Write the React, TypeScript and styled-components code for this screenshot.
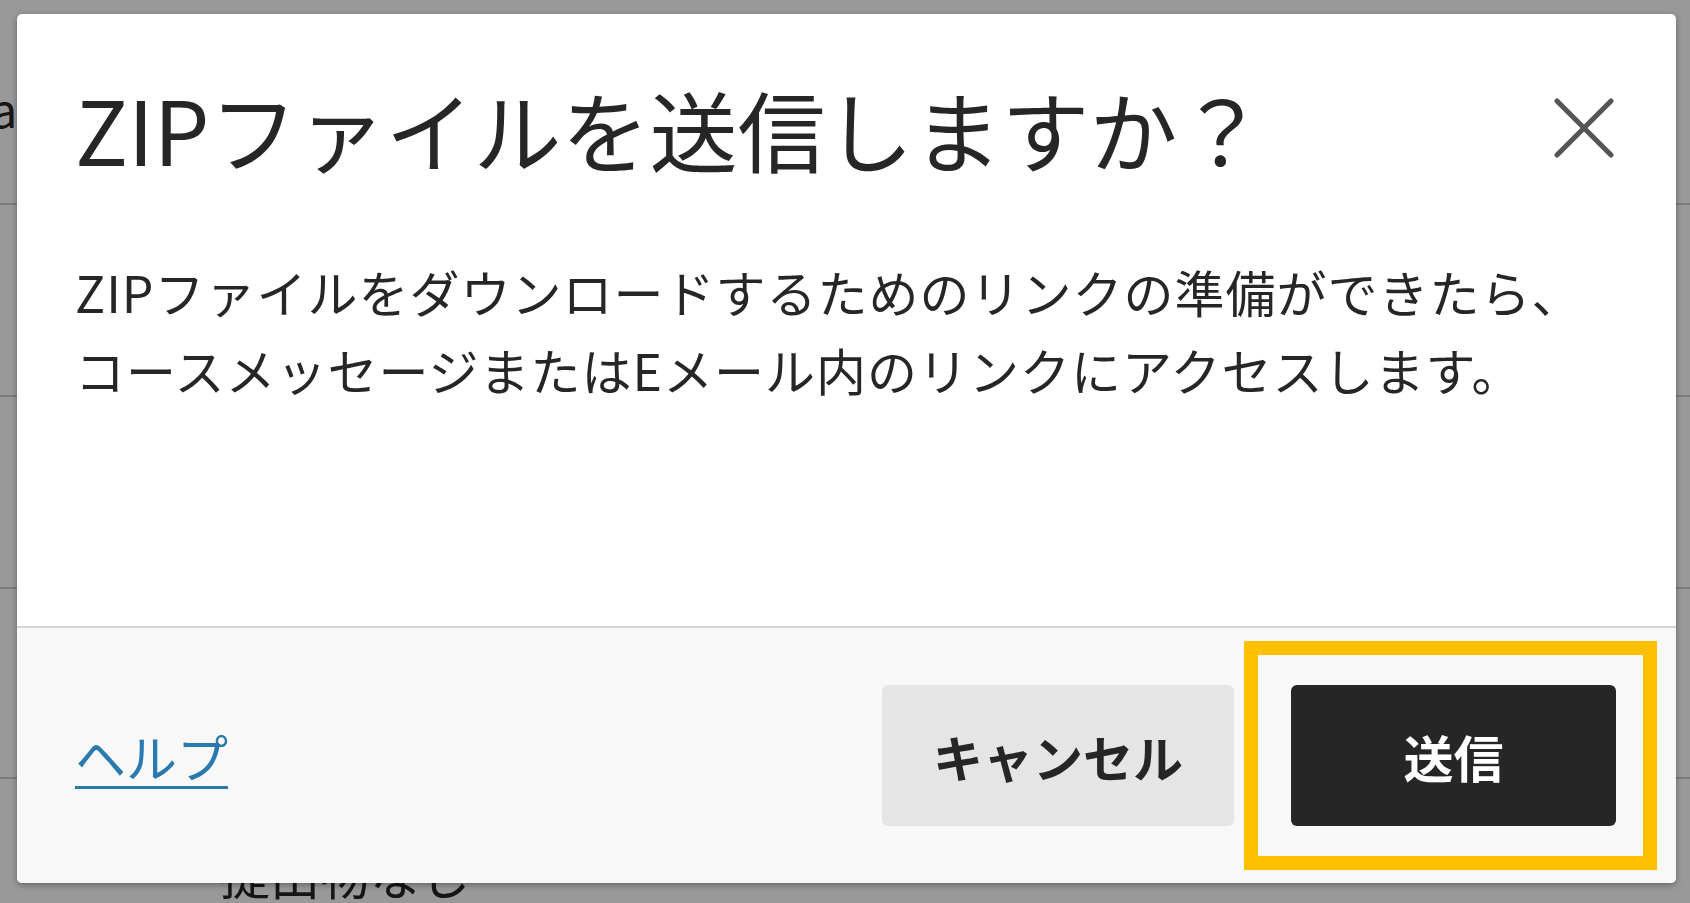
import React from "react";
import styled, { createGlobalStyle } from "styled-components";

const GlobalStyle = createGlobalStyle`
  body {
    margin: 0;
    font-family: "Noto Sans CJK JP", "Noto Sans", sans-serif;
    color: #262626;
  }
`;

const Page = styled.div`
  position: relative;
  width: 100%;
  height: 903px;
  overflow: hidden;
  background: #ffffff;
`;

const List = styled.div`
  display: flex;
  flex-direction: column;
  padding-top: 13px;
`;

const Row = styled.div<{ $h: number; $top?: number }>`
  display: flex;
  align-items: ${(p) => (p.$top ? "flex-start" : "center")};
  height: ${(p) => p.$h}px;
  box-sizing: border-box;
  padding-top: ${(p) => p.$top ?? 0}px;
  border-bottom: 2px solid #cfcfcf;
  padding-left: 220px;
  font-size: 50px;
  line-height: 72px;
  color: #262626;
`;

const EdgeLabel = styled.span`
  margin-left: -262px;
  font-size: 46px;
`;

const Overlay = styled.div`
  position: absolute;
  inset: 0;
  background: rgba(0, 0, 0, 0.4);
  display: flex;
  align-items: flex-start;
  padding: 14px 14px 20px 17px;
`;

const Dialog = styled.div`
  width: 1659px;
  height: 869px;
  background: #ffffff;
  border-radius: 5px;
  box-shadow: 0 2px 6px rgba(0, 0, 0, 0.35);
  display: flex;
  flex-direction: column;
  overflow: hidden;
`;

const Content = styled.div`
  flex: 1;
  padding: 61px 62px 0 58px;
`;

const Header = styled.div`
  display: flex;
  align-items: center;
  justify-content: space-between;
`;

const Title = styled.h1`
  margin: 0;
  font-size: 88px;
  font-weight: 400;
  line-height: 1.2;
`;

const CloseButton = styled.button`
  display: flex;
  padding: 0;
  border: none;
  background: none;
  cursor: pointer;
`;

const Message = styled.p`
  margin: 71px 0 0;
  font-size: 50px;
  line-height: 78px;
  letter-spacing: 1px;
`;

const Footer = styled.div`
  height: 255px;
  border-top: 2px solid #d4d4d4;
  background: #f8f8f8;
  display: flex;
  align-items: center;
  justify-content: space-between;
  padding: 0 19px 0 58px;
`;

const HelpLink = styled.a`
  font-size: 51px;
  color: #2a7ab0;
  text-decoration: underline;
  text-decoration-thickness: 3px;
  text-underline-offset: 8px;
  cursor: pointer;
`;

const Actions = styled.div`
  display: flex;
  align-items: center;
  gap: 10px;
`;

const Button = styled.button<{ $primary?: boolean }>`
  height: 141px;
  width: ${(p) => (p.$primary ? 325 : 352)}px;
  border: none;
  border-radius: 6px;
  background: ${(p) => (p.$primary ? "#262626" : "#e5e5e5")};
  color: ${(p) => (p.$primary ? "#ffffff" : "#262626")};
  font-family: "Noto Sans CJK JP", sans-serif;
  font-size: 50px;
  font-weight: 700;
  cursor: pointer;
`;

const Highlight = styled.div`
  display: flex;
  border: 14px solid #ffc000;
  padding: 30px 27px 30px 33px;
`;

const CloseIcon = () => (
  <svg width="60" height="60" viewBox="0 0 60 60">
    <path
      d="M3 3 L57 57 M57 3 L3 57"
      stroke="#555555"
      strokeWidth="5"
      strokeLinecap="round"
    />
  </svg>
);

const App = () => {
  return (
    <Page>
      <GlobalStyle />
      <List>
        <Row $h={192}>
          <EdgeLabel>Name</EdgeLabel>
        </Row>
        <Row $h={192} />
        <Row $h={192} />
        <Row $h={190} />
        <Row $h={150} $top={58}>
          提出物なし
        </Row>
      </List>
      <Overlay>
        <Dialog>
          <Content>
            <Header>
              <Title>ZIPファイルを送信しますか？</Title>
              <CloseButton aria-label="閉じる">
                <CloseIcon />
              </CloseButton>
            </Header>
            <Message>
              ZIPファイルをダウンロードするためのリンクの準備ができたら、
              <br />
              コースメッセージまたはEメール内のリンクにアクセスします。
            </Message>
          </Content>
          <Footer>
            <HelpLink>ヘルプ</HelpLink>
            <Actions>
              <Button>キャンセル</Button>
              <Highlight>
                <Button $primary>送信</Button>
              </Highlight>
            </Actions>
          </Footer>
        </Dialog>
      </Overlay>
    </Page>
  );
};

export default App;
